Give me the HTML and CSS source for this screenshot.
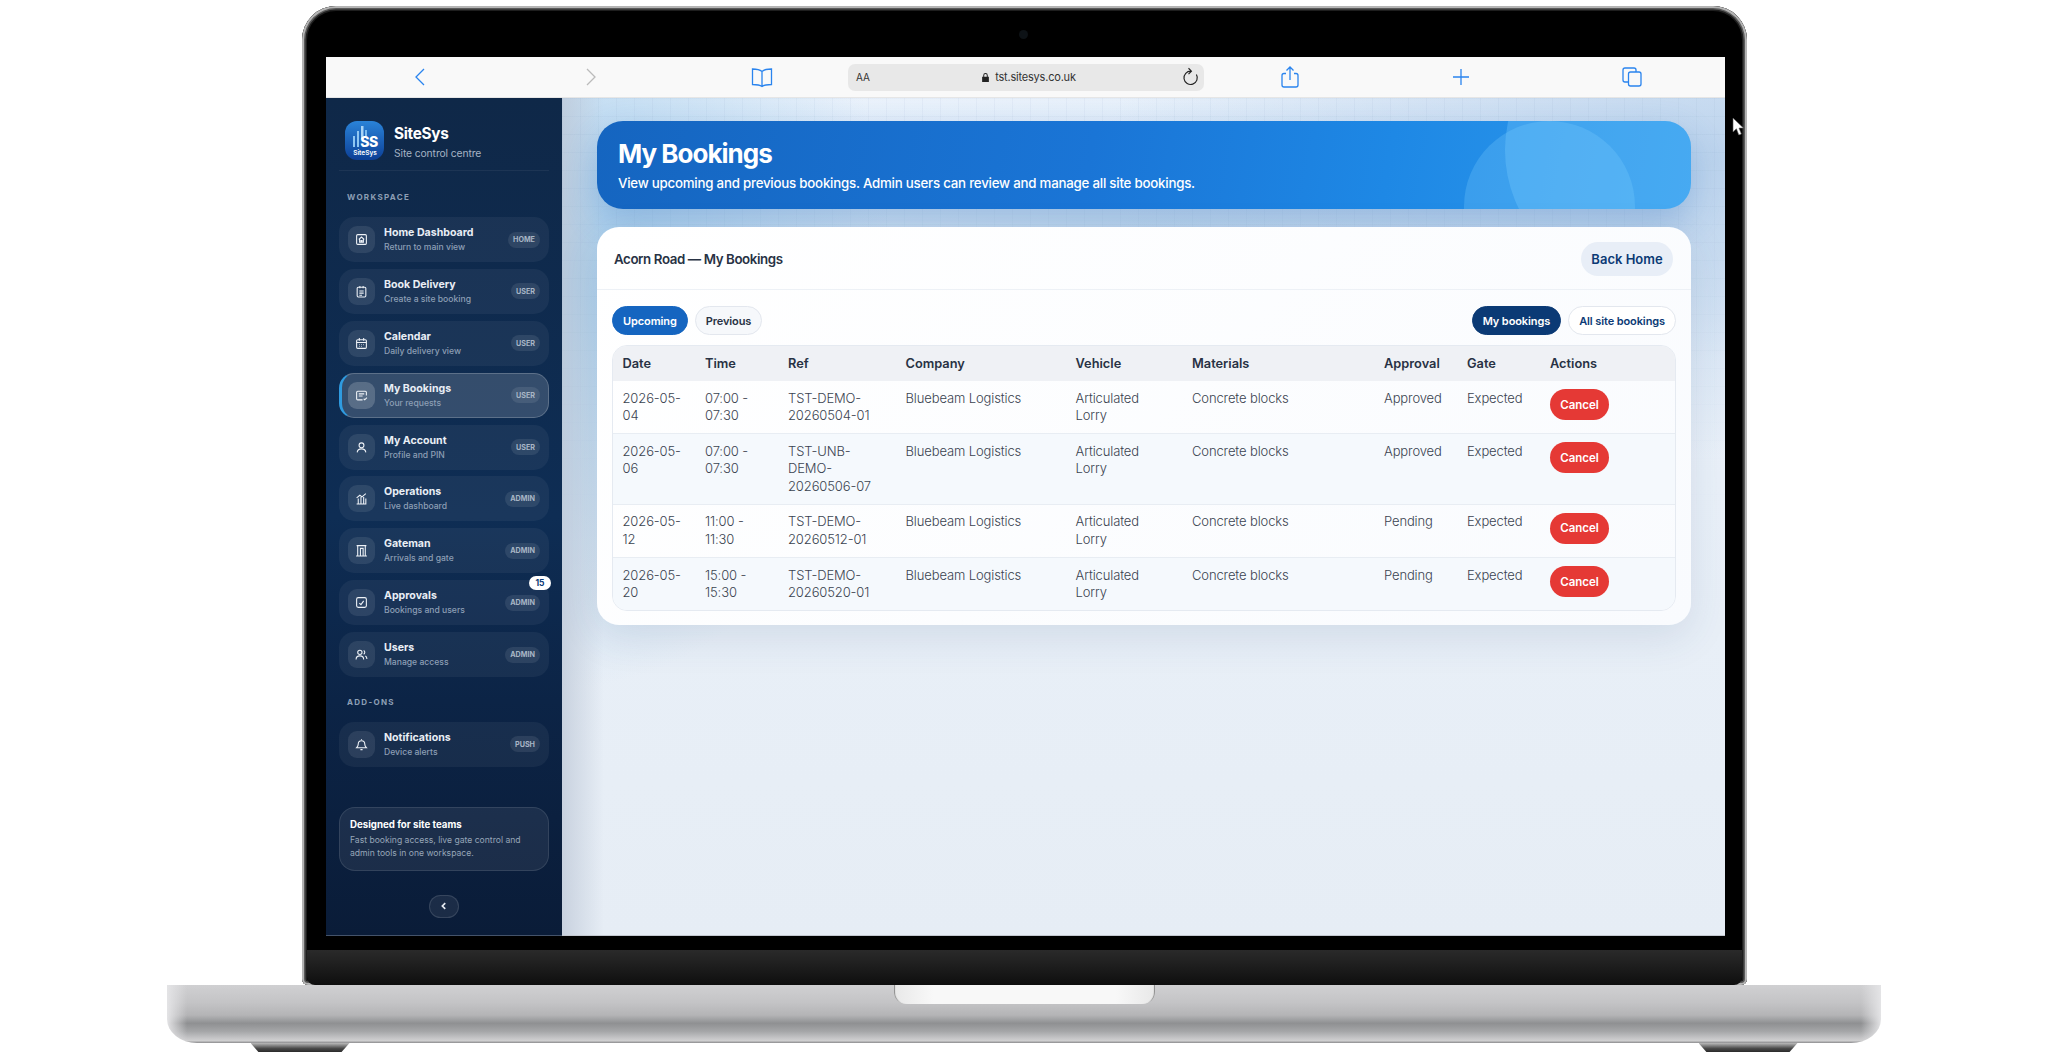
FILE: index.html
```html
<!DOCTYPE html>
<html lang="en-GB">
<head>
    <meta charset="UTF-8">
    <meta name="viewport" content="width=device-width, initial-scale=1.0">
    <title>SiteSys - My Bookings</title>
    <link rel="stylesheet" href="styles.css">
</head>
<body>
    <svg class="cursor" viewBox="0 0 12 19" width="12" height="19">
        <path d="M1 1v14l3.4-3.2L6.8 18l2.6-1.1-2.4-5.8H11.500z" fill="#fff" stroke="#555" stroke-width="0.6"/>
    </svg>

    <div class="lid">
        <div class="camera"></div>
        <div class="screen">
            <!-- safari bar -->
            <div class="safari">
                <span class="safari-btn">
                    <svg viewBox="0 0 24 24" class="safari-icon"><path d="M16 4l-8 8 8 8"/></svg>
                </span>
                <span class="safari-btn">
                    <svg viewBox="0 0 24 24" class="safari-icon muted"><path d="M8 4l8 8-8 8"/></svg>
                </span>
                <span class="safari-btn">
                    <svg viewBox="0 0 24 24" class="safari-icon"><path d="M12 6.500C10 4.800 7 4 2.500 4v15.500c4.500 0 7.500.5 9.500 2 2-1.500 5-2 9.500-2V4C17 4 14 4.800 12 6.500zM12 6.500v15"/></svg>
                </span>
                <div class="address">
                    <span class="address-aa">AA</span>
                    <span class="address-url">
                        <svg viewBox="0 0 12 14" class="lock"><path d="M3 6V4a3 3 0 0 1 6 0v2h1.500v7h-9V6zM4.300 6h3.400V4a1.700 1.700 0 0 0-3.400 0z"/></svg>
                        tst.sitesys.co.uk
                    </span>
                    <svg viewBox="0 0 24 24" class="reload"><path d="M18.500 9A8 8 0 1 1 12 5M9 1.500L12.500 5 9 8.500"/></svg>
                </div>
                <span class="safari-btn">
                    <svg viewBox="0 0 24 24" class="safari-icon"><path d="M8 8.500H6a2 2 0 0 0-2 2V20a2 2 0 0 0 2 2h12a2 2 0 0 0 2-2v-9.500a2 2 0 0 0-2-2h-2M12 15V2M8.500 5.500L12 2l3.500 3.500"/></svg>
                </span>
                <span class="safari-btn">
                    <svg viewBox="0 0 24 24" class="safari-icon"><path d="M12 4v16M4 12h16"/></svg>
                </span>
                <span class="safari-btn">
                    <svg viewBox="0 0 24 24" class="safari-icon"><rect x="8.500" y="7" width="12.500" height="14" rx="2"/><path d="M8.500 17H5a2 2 0 0 1-2-2V5a2 2 0 0 1 2-2h9a2 2 0 0 1 2 2v2"/></svg>
                </span>
            </div>

            <div class="app">
                <aside class="sidebar">
                    <div class="brand">
                        <svg class="logo" viewBox="0 0 39 39">
                            <defs>
                                <linearGradient id="logo-bg" x1="0" y1="0" x2="0" y2="1">
                                    <stop offset="0" stop-color="#2a83d8"/>
                                    <stop offset="1" stop-color="#0c3f96"/>
                                </linearGradient>
                            </defs>
                            <rect width="39" height="39" rx="12" fill="url(#logo-bg)"/>
                            <rect x="8" y="15" width="2" height="11" fill="#8fc6f2"/>
                            <rect x="12" y="10" width="2" height="16" fill="#8fc6f2"/>
                            <rect x="16" y="5" width="2.500" height="13" fill="#a9d4f6"/>
                            <rect x="20" y="9" width="2" height="6" fill="#7fbdf0"/>
                            <text x="24" y="26" class="logo-ss" text-anchor="middle">SS</text>
                            <text x="20" y="33.500" class="logo-name" text-anchor="middle">SiteSys</text>
                        </svg>
                        <div>
                            <div class="brand-name">SiteSys</div>
                            <div class="brand-sub">Site control centre</div>
                        </div>
                    </div>

                    <div class="nav-label">WORKSPACE</div>
                    <nav class="nav-list">
                        <a class="nav-item">
                            <span class="nav-icon"><svg viewBox="0 0 24 24"><rect x="3" y="3" width="18" height="18" rx="2"/><path d="M7 12l5-4.500 5 4.500M8.500 11v6h7v-6M11 17v-3h2v3"/></svg></span>
                            <span class="nav-text"><b>Home Dashboard</b><small>Return to main view</small></span>
                            <span class="pill">HOME</span>
                        </a>
                        <a class="nav-item">
                            <span class="nav-icon"><svg viewBox="0 0 24 24"><rect x="4" y="4" width="16" height="18" rx="2"/><path d="M9 2v4M15 2v4M8 11h8M8 15h8M8 19h5"/></svg></span>
                            <span class="nav-text"><b>Book Delivery</b><small>Create a site booking</small></span>
                            <span class="pill">USER</span>
                        </a>
                        <a class="nav-item">
                            <span class="nav-icon"><svg viewBox="0 0 24 24"><rect x="3" y="5" width="18" height="16" rx="2"/><path d="M3 10h18M8 2v5M16 2v5M7.500 14h1M11.500 14h1M15.500 14h1M7.500 17.500h1M11.500 17.500h1"/></svg></span>
                            <span class="nav-text"><b>Calendar</b><small>Daily delivery view</small></span>
                            <span class="pill">USER</span>
                        </a>
                        <a class="nav-item active">
                            <span class="nav-icon"><svg viewBox="0 0 24 24"><path d="M21 12V6a2 2 0 0 0-2-2H5a2 2 0 0 0-2 2v12a2 2 0 0 0 2 2h9"/><path d="M7 9h10M7 13h7M16 18l2 2 4-4"/></svg></span>
                            <span class="nav-text"><b>My Bookings</b><small>Your requests</small></span>
                            <span class="pill">USER</span>
                        </a>
                        <a class="nav-item">
                            <span class="nav-icon"><svg viewBox="0 0 24 24"><circle cx="12" cy="8" r="4.500"/><path d="M4 21c.5-4.500 3.500-6.500 8-6.500s7.500 2 8 6.500"/></svg></span>
                            <span class="nav-text"><b>My Account</b><small>Profile and PIN</small></span>
                            <span class="pill">USER</span>
                        </a>
                        <a class="nav-item">
                            <span class="nav-icon"><svg viewBox="0 0 24 24"><path d="M3 22h18M6 22V12M11 22V9M16 22V9M20 22V12M3 11l6-5 4 3 7-6"/></svg></span>
                            <span class="nav-text"><b>Operations</b><small>Live dashboard</small></span>
                            <span class="pill">ADMIN</span>
                        </a>
                        <a class="nav-item">
                            <span class="nav-icon"><svg viewBox="0 0 24 24"><path d="M2 22h20M5 22V3h14v19M10 22V8h5v14M3 3h18"/></svg></span>
                            <span class="nav-text"><b>Gateman</b><small>Arrivals and gate</small></span>
                            <span class="pill">ADMIN</span>
                        </a>
                        <a class="nav-item">
                            <span class="nav-icon"><svg viewBox="0 0 24 24"><rect x="3" y="3" width="18" height="18" rx="3"/><path d="M8 13l3 3 5-7"/></svg></span>
                            <span class="nav-text"><b>Approvals</b><small>Bookings and users</small></span>
                            <span class="pill">ADMIN</span>
                            <span class="count">15</span>
                        </a>
                        <a class="nav-item">
                            <span class="nav-icon"><svg viewBox="0 0 24 24"><circle cx="9" cy="8" r="4"/><path d="M2 21c0-4.500 3-6.500 7-6.500s7 2 7 6.500M16 4.500a4 4 0 0 1 0 7M19 14.800c2 .8 3 3 3 5.700"/></svg></span>
                            <span class="nav-text"><b>Users</b><small>Manage access</small></span>
                            <span class="pill">ADMIN</span>
                        </a>
                    </nav>

                    <div class="nav-label addons">ADD-ONS</div>
                    <nav class="nav-list">
                        <a class="nav-item">
                            <span class="nav-icon"><svg viewBox="0 0 24 24"><path d="M3 18h18c-2-2-3-3.500-3-7a6 6 0 0 0-12 0c0 3.500-1 5-3 7zM10 21.500h4M12 3V2"/></svg></span>
                            <span class="nav-text"><b>Notifications</b><small>Device alerts</small></span>
                            <span class="pill">PUSH</span>
                        </a>
                    </nav>

                    <div class="side-note">
                        <strong>Designed for site teams</strong>
                        <p>Fast booking access, live gate control and admin tools in one workspace.</p>
                    </div>
                    <button class="collapse">
                        <svg viewBox="0 0 24 24"><path d="M15 5l-7 7 7 7"/></svg>
                    </button>
                </aside>

                <main class="content">
                    <section class="hero">
                        <span class="hero-circle one"></span>
                        <span class="hero-circle two"></span>
                        <h1>My Bookings</h1>
                        <p>View upcoming and previous bookings. Admin users can review and manage all site bookings.</p>
                    </section>

                    <section class="card">
                        <div class="card-head">
                            <h2>Acorn Road — My Bookings</h2>
                            <a class="back-btn">Back Home</a>
                        </div>
                        <div class="card-body">
                            <div class="filters">
                                <div class="filter-group">
                                    <a class="chip primary">Upcoming</a>
                                    <a class="chip">Previous</a>
                                </div>
                                <div class="filter-group">
                                    <a class="chip navy">My bookings</a>
                                    <a class="chip outline">All site bookings</a>
                                </div>
                            </div>
                            <div class="table-wrap">
                                <table>
                                    <colgroup>
                                        <col class="c-date"><col class="c-time"><col class="c-ref"><col class="c-company"><col class="c-vehicle"><col class="c-materials"><col class="c-approval"><col class="c-gate"><col class="c-actions">
                                    </colgroup>
                                    <thead>
                                        <tr>
                                            <th>Date</th><th>Time</th><th>Ref</th><th>Company</th><th>Vehicle</th><th>Materials</th><th>Approval</th><th>Gate</th><th>Actions</th>
                                        </tr>
                                    </thead>
                                    <tbody>
                                        <tr>
                                            <td>2026-05-04</td>
                                            <td>07:00 - 07:30</td>
                                            <td>TST-DEMO-20260504-01</td>
                                            <td>Bluebeam Logistics</td>
                                            <td>Articulated Lorry</td>
                                            <td>Concrete blocks</td>
                                            <td>Approved</td>
                                            <td>Expected</td>
                                            <td><button class="cancel">Cancel</button></td>
                                        </tr>
                                        <tr>
                                            <td>2026-05-06</td>
                                            <td>07:00 - 07:30</td>
                                            <td>TST-UNB-DEMO-20260506-07</td>
                                            <td>Bluebeam Logistics</td>
                                            <td>Articulated Lorry</td>
                                            <td>Concrete blocks</td>
                                            <td>Approved</td>
                                            <td>Expected</td>
                                            <td><button class="cancel">Cancel</button></td>
                                        </tr>
                                        <tr>
                                            <td>2026-05-12</td>
                                            <td>11:00 - 11:30</td>
                                            <td>TST-DEMO-20260512-01</td>
                                            <td>Bluebeam Logistics</td>
                                            <td>Articulated Lorry</td>
                                            <td>Concrete blocks</td>
                                            <td>Pending</td>
                                            <td>Expected</td>
                                            <td><button class="cancel">Cancel</button></td>
                                        </tr>
                                        <tr>
                                            <td>2026-05-20</td>
                                            <td>15:00 - 15:30</td>
                                            <td>TST-DEMO-20260520-01</td>
                                            <td>Bluebeam Logistics</td>
                                            <td>Articulated Lorry</td>
                                            <td>Concrete blocks</td>
                                            <td>Pending</td>
                                            <td>Expected</td>
                                            <td><button class="cancel">Cancel</button></td>
                                        </tr>
                                    </tbody>
                                </table>
                            </div>
                        </div>
                    </section>
                </main>
            </div>
        </div>
        <div class="chin"></div>
    </div>

    <div class="base">
        <div class="notch"></div>
    </div>
    <div class="feet">
        <span class="foot"></span>
        <span class="foot"></span>
    </div>
</body>
</html>
```

FILE: styles.css
```css
:root {
    --navy: #0b3a75;
    --blue: #1565c0;
    --red: #e53935;
    --side-text: #e9eef5;
    --side-muted: #8d9fb5;
    --ink: #283244;
    --cell: #3a4350;
    --font: Inter, "Noto Sans", sans-serif;
}

* {
    box-sizing: border-box;
}

html, body {
    margin: 0;
    height: 1060px;
    overflow: hidden;
    background: #fff;
}

body {
    display: flex;
    flex-direction: column;
    align-items: center;
    padding-top: 6px;
    font-family: var(--font);
    position: relative;
}

a {
    text-decoration: none;
}

.cursor {
    position: absolute;
    left: 1732px;
    top: 117px;
    z-index: 5;
}

/* laptop */
.lid {
    width: 1445px;
    height: 979px;
    flex: none;
    margin-left: 1px;
    padding-top: 51px;
    background: #000;
    border-radius: 34px 34px 6px 6px;
    box-shadow: inset 0 0 0 2px #b4b4b4, inset 0 0 0 3.500px #5a5a5a, inset 0 0 0 5px #1e1e1e;
    position: relative;
}

.camera {
    position: absolute;
    left: 717px;
    top: 24px;
    width: 9px;
    height: 9px;
    border-radius: 50%;
    background: #0d1216;
}

.screen {
    width: 1399px;
    height: 879px;
    margin: 0 22px 14px 24px;
    display: flex;
    flex-direction: column;
    overflow: hidden;
}

.chin {
    height: 35px;
    margin: 0 5px;
    border-radius: 0 0 8px 8px;
    background: linear-gradient(#2a2a2a, #222 30%, #0e0e0e);
}

.base {
    width: 1714px;
    height: 58px;
    flex: none;
    display: flex;
    justify-content: center;
    border-radius: 0 0 30px 30px / 0 0 24px 24px;
    background:
        linear-gradient(90deg, #e4e4e6 0, rgba(228, 228, 230, 0) 20px, rgba(228, 228, 230, 0) calc(100% - 20px), #e4e4e6 100%),
        linear-gradient(#d0d0d2 0, #c4c4c6 30%, #b4b4b6 52%, #8f9092 66%, #a5a6a8 80%, #c6c6c8 92%, #cfcfd0 96%, #8b8b8d 100%);
}

.notch {
    width: 261px;
    height: 19px;
    border-radius: 0 0 12px 12px;
    background: linear-gradient(90deg, #e8e8e8, #f8f8f8 15%, #f8f8f8 85%, #e8e8e8);
    box-shadow: inset 2px 0 1px -1px #8a8a8a, inset -2px 0 1px -1px #8a8a8a;
}

.feet {
    width: 1547px;
    display: flex;
    justify-content: space-between;
}

.foot {
    width: 99px;
    height: 9px;
    background: linear-gradient(#b9b9b9, #4a4a4a 60%, #2a2a2a);
    clip-path: polygon(0 0, 100% 0, 92% 100%, 8% 100%);
}

/* safari bar */
.safari {
    height: 41px;
    flex: none;
    padding-left: 8px;
    display: grid;
    grid-template-columns: 171px 171px 171px 357px 171px 171px 171px;
    align-items: center;
    background: #f9f9f9;
    border-bottom: 1px solid #e6e6e6;
}

.safari-btn {
    display: flex;
    justify-content: center;
}

.safari-icon {
    width: 24px;
    height: 24px;
    fill: none;
    stroke: #2a84ee;
    stroke-width: 1.300;
}

.safari-icon.muted {
    stroke: #bbb;
}

.address {
    height: 27px;
    padding: 0 3px 0 8px;
    margin: 0 0 0 1px;
    display: flex;
    align-items: center;
    justify-content: space-between;
    background: #e8e8e8;
    border-radius: 7px;
    color: #333;
}

.address-aa {
    font-size: 10px;
}

.address-url {
    display: flex;
    align-items: center;
    gap: 5px;
    font-size: 11px;
    letter-spacing: -0.200px;
    margin-left: 6px;
}

.lock {
    width: 9px;
    height: 11px;
    fill: #222;
    fill-rule: evenodd;
}

.reload {
    width: 20px;
    height: 20px;
    fill: none;
    stroke: #222;
    stroke-width: 1.400;
}

/* app */
.app {
    flex: 1;
    display: flex;
    min-height: 0;
}

.sidebar {
    width: 236px;
    flex: none;
    padding: 23px 13px 0;
    display: flex;
    flex-direction: column;
    background: linear-gradient(#0f2848 0, #0e2d54 50%, #0c2446 72%, #0a1c38 100%);
    border-bottom: 1px solid #44536a;
}

.brand {
    height: 50px;
    flex: none;
    padding: 0 6px;
    display: flex;
    gap: 10px;
    border-bottom: 1px solid rgba(255, 255, 255, 0.06);
}

.logo {
    width: 39px;
    height: 39px;
    flex: none;
}

.logo-ss {
    font: 800 14px var(--font);
    fill: #fff;
    letter-spacing: -0.5px;
}

.logo-name {
    font: 600 6.500px var(--font);
    fill: #fff;
}

.brand-name {
    margin-top: 3px;
    font-size: 15.300px;
    font-weight: 700;
    letter-spacing: -0.300px;
    line-height: 20px;
    color: #fff;
}

.brand-sub {
    margin-top: 3px;
    font-size: 10.300px;
    line-height: 13px;
    letter-spacing: -0.100px;
    color: #a5b3c4;
}

.nav-label {
    margin: 20.500px 0 14.500px 8px;
    font-size: 8px;
    line-height: 11px;
    font-weight: 700;
    letter-spacing: 1.300px;
    color: var(--side-muted);
}

.nav-label.addons {
    margin-top: 19.500px;
    margin-bottom: 14.300px;
}

.nav-list {
    display: flex;
    flex-direction: column;
    gap: 6.900px;
}

.nav-item {
    height: 45px;
    padding: 0 9px;
    display: flex;
    align-items: center;
    gap: 9px;
    border-radius: 15px;
    background: rgba(255, 255, 255, 0.05);
    position: relative;
}

.nav-item.active {
    background: rgba(255, 255, 255, 0.16);
    border: 1px solid rgba(255, 255, 255, 0.2);
    border-left: 3px solid #2f9be0;
    padding-left: 6px;
    padding-right: 8px;
}

.nav-icon {
    width: 27px;
    height: 27px;
    flex: none;
    display: flex;
    align-items: center;
    justify-content: center;
    border-radius: 9px;
    background: rgba(255, 255, 255, 0.09);
}

.active .nav-icon {
    background: rgba(255, 255, 255, 0.18);
}

.nav-icon svg {
    width: 13px;
    height: 13px;
    fill: none;
    stroke: #eef2f7;
    stroke-width: 2;
}

.nav-text {
    flex: 1;
    min-width: 0;
    display: flex;
    flex-direction: column;
    gap: 2px;
}

.nav-text b {
    font-size: 10.600px;
    line-height: 14px;
    font-weight: 700;
    color: var(--side-text);
    white-space: nowrap;
}

.nav-text small {
    font-size: 8.600px;
    line-height: 11px;
    font-weight: 500;
    color: var(--side-muted);
    white-space: nowrap;
}

.pill {
    height: 16px;
    padding: 0 5px;
    display: flex;
    align-items: center;
    border-radius: 8px;
    background: rgba(255, 255, 255, 0.09);
    font-size: 7.200px;
    font-weight: 700;
    color: #a9b6c6;
}

.count {
    position: absolute;
    left: 190px;
    top: -4px;
    width: 22px;
    height: 14px;
    display: flex;
    align-items: center;
    justify-content: center;
    border-radius: 7px;
    background: #fff;
    font-size: 8.500px;
    font-weight: 700;
    color: var(--navy);
}

.side-note {
    height: 64px;
    flex: none;
    margin-top: 40px;
    padding: 10px 10px 0;
    border-radius: 16px;
    border: 1px solid rgba(255, 255, 255, 0.1);
    background: rgba(255, 255, 255, 0.07);
}

.side-note strong {
    display: block;
    font-size: 9.700px;
    line-height: 13px;
    font-weight: 700;
    color: #fff;
}

.side-note p {
    margin: 3px 0 0;
    font-size: 8.600px;
    line-height: 12.700px;
    color: #97a6b8;
}

.collapse {
    width: 30px;
    height: 23px;
    flex: none;
    margin: 24px auto 0;
    padding: 0;
    display: flex;
    align-items: center;
    justify-content: center;
    border-radius: 12px;
    border: 1px solid rgba(255, 255, 255, 0.12);
    background: rgba(255, 255, 255, 0.07);
}

.collapse svg {
    width: 10px;
    height: 10px;
    fill: none;
    stroke: #e6ebf2;
    stroke-width: 4;
}

/* main area */
.content {
    flex: 1;
    min-width: 0;
    padding: 23px 34px 0 35px;
    border-bottom: 1px solid #c3c8d0;
    position: relative;
    background:
        linear-gradient(90deg, rgba(190, 200, 215, 0.75), rgba(190, 200, 215, 0) 42px) 0 0 / 100% 100% no-repeat,
        radial-gradient(330px 420px at 0 170px, #a9cfec 0, rgba(169, 207, 236, 0) 100%),
        radial-gradient(620px 300px at 100% 60px, rgba(180, 206, 234, 0.85), rgba(180, 206, 234, 0) 100%),
        radial-gradient(900px 170px at 50% 130px, rgba(175, 205, 232, 0.6), rgba(175, 205, 232, 0) 100%),
        linear-gradient(#f2f7fe 0, #e9f0f8 45%, #e6edf5 100%);
}

/* faint grid, only shows near the top */
.content::before {
    content: "";
    position: absolute;
    inset: 0;
    background:
        linear-gradient(rgba(110, 140, 180, 0.06) 1px, transparent 1px) 0 0 / 18px 18px,
        linear-gradient(90deg, rgba(110, 140, 180, 0.06) 1px, transparent 1px) 0 0 / 18px 18px;
    -webkit-mask-image: linear-gradient(#000, transparent 420px);
    mask-image: linear-gradient(#000, transparent 420px);
}

.hero {
    height: 88px;
    padding: 17px 21px 0;
    border-radius: 26px;
    background: linear-gradient(100deg, #1565c0 0, #1a75d6 45%, #1e88e5 72%, #2e9aec 100%);
    box-shadow: 0 14px 34px rgba(40, 110, 190, 0.3);
    position: relative;
    overflow: hidden;
    color: #fff;
}

.hero-circle {
    position: absolute;
    border-radius: 50%;
    background: rgba(130, 210, 255, 0.25);
}

.hero-circle.one {
    left: 867px;
    top: 0;
    width: 171px;
    height: 171px;
}

.hero-circle.two {
    left: 908px;
    top: -102px;
    width: 262px;
    height: 262px;
    background: rgba(130, 210, 255, 0.3);
}

.hero h1 {
    margin: 0;
    font-size: 26px;
    line-height: 32px;
    font-weight: 700;
    letter-spacing: -1px;
    position: relative;
}

.hero p {
    margin: 4px 0 0;
    font-size: 13.300px;
    line-height: 18px;
    font-weight: 500;
    letter-spacing: -0.230px;
    position: relative;
}

.card {
    margin-top: 18px;
    height: 398px;
    border-radius: 22px;
    background: linear-gradient(135deg, #fff, #f9fbfe);
    box-shadow: 0 12px 40px rgba(40, 70, 120, 0.12);
    position: relative;
}

.card-head {
    height: 63px;
    padding: 1px 18px 0 17px;
    display: flex;
    align-items: center;
    justify-content: space-between;
    border-bottom: 1px solid #edf1f6;
}

.card-head h2 {
    margin: 0;
    font-size: 13.300px;
    font-weight: 600;
    letter-spacing: -0.400px;
    color: var(--ink);
}

.back-btn {
    width: 92px;
    height: 34px;
    display: flex;
    align-items: center;
    justify-content: center;
    border-radius: 17px;
    background: #e8eef7;
    font-size: 13px;
    font-weight: 600;
    color: var(--navy);
}

.card-body {
    padding: 16px 15px 0;
}

.filters {
    display: flex;
    justify-content: space-between;
    margin-bottom: 10px;
}

.filter-group {
    display: flex;
    gap: 7px;
}

.chip {
    height: 29px;
    padding: 0 10px;
    display: flex;
    align-items: center;
    border-radius: 15px;
    border: 1px solid #e3e7ee;
    background: #f6f8fb;
    font-size: 11px;
    font-weight: 600;
    letter-spacing: -0.100px;
    color: var(--ink);
}

.chip.primary {
    background: var(--blue);
    border-color: var(--blue);
    color: #fff;
}

.chip.navy {
    background: var(--navy);
    border-color: var(--navy);
    color: #fff;
}

.chip.outline {
    background: #fff;
    color: var(--navy);
}

.table-wrap {
    border: 1px solid #e5eaf1;
    border-radius: 15px;
    overflow: hidden;
}

table {
    width: 100%;
    table-layout: fixed;
    border-collapse: collapse;
    font-size: 13px;
}

.c-date { width: 82.500px; }
.c-time { width: 83px; }
.c-ref { width: 117.500px; }
.c-company { width: 170px; }
.c-vehicle { width: 116.500px; }
.c-materials { width: 192px; }
.c-approval { width: 83px; }
.c-gate { width: 83px; }

th {
    height: 35px;
    padding: 0 9.500px;
    text-align: left;
    font-size: 12.800px;
    font-weight: 600;
    color: var(--ink);
    background: #eff1f5;
}

td {
    padding: 8.500px 9.500px 8px;
    vertical-align: top;
    line-height: 17.800px;
    font-weight: 300;
    color: var(--cell);
    border-top: 1px solid #e8edf3;
    letter-spacing: -0.120px;
}

tbody tr:first-child td {
    border-top: 0;
}

tbody tr:nth-child(even) td {
    background: #f5f9fd;
}

.cancel {
    width: 59px;
    height: 31px;
    display: block;
    padding: 0;
    margin-top: -0.500px;
    border: 0;
    border-radius: 16px;
    background: var(--red);
    font-family: var(--font);
    font-size: 11.500px;
    font-weight: 600;
    color: #fff;
}
```
